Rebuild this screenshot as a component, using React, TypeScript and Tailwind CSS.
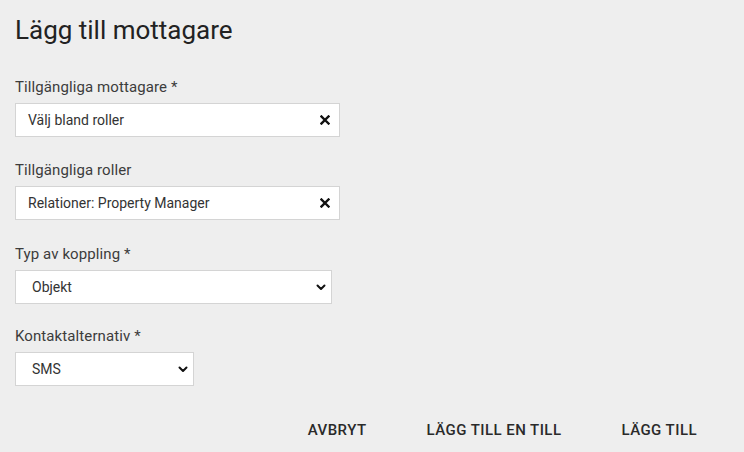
import React from 'react';

function ClearIcon() {
  return (
    <svg width="10" height="10" viewBox="0 0 10 10" className="shrink-0">
      <path d="M1.5 1.5 L8.5 8.5 M8.5 1.5 L1.5 8.5" stroke="#111" strokeWidth="2.4" strokeLinecap="square" />
    </svg>
  );
}

function Chevron() {
  return (
    <svg width="10" height="7" viewBox="0 0 10 7" className="shrink-0">
      <path d="M1.5 1.5 L5 5 L8.5 1.5" stroke="#111" strokeWidth="2" fill="none" strokeLinecap="round" strokeLinejoin="round" />
    </svg>
  );
}

function Label({ children }: { children: React.ReactNode }) {
  return <div className="text-[15px] leading-[20px] tracking-[0.1px] text-[#3c3c3c]">{children}</div>;
}

export default function App() {
  return (
    <div
      className="w-[744px] h-[452px] bg-[#eeeeee] overflow-hidden flex flex-col pl-[15px] pt-[15px]"
      style={{ fontFamily: 'Roboto, "Liberation Sans", sans-serif' }}
    >
      <h1 className="text-[26px] leading-[30px] text-[#222] font-normal">Lägg till mottagare</h1>

      <div className="mt-[32px]">
        <Label>Tillgängliga mottagare *</Label>
        <div className="mt-[6px] w-[325px] h-[34px] bg-white border border-[#d4d4d4] flex items-center justify-between pl-[12px] pr-[9px]">
          <span className="text-[14px] text-[#333]">Välj bland roller</span>
          <ClearIcon />
        </div>
      </div>

      <div className="mt-[23px]">
        <Label>Tillgängliga roller</Label>
        <div className="mt-[6px] w-[325px] h-[34px] bg-white border border-[#d4d4d4] flex items-center justify-between pl-[12px] pr-[9px]">
          <span className="text-[14px] text-[#333]">Relationer: Property Manager</span>
          <ClearIcon />
        </div>
      </div>

      <div className="mt-[24px]">
        <Label>Typ av koppling *</Label>
        <div className="mt-[6px] w-[317px] h-[34px] bg-white border border-[#d4d4d4] flex items-center justify-between pl-[16px] pr-[5px]">
          <span className="text-[14px] text-[#333]">Objekt</span>
          <Chevron />
        </div>
      </div>

      <div className="mt-[22px]">
        <Label>Kontaktalternativ *</Label>
        <div className="mt-[6px] w-[179px] h-[34px] bg-white border border-[#d4d4d4] flex items-center justify-between pl-[16px] pr-[5px]">
          <span className="text-[14px] text-[#333]">SMS</span>
          <Chevron />
        </div>
      </div>

      <div className="mt-[26px] flex justify-end pr-[17px]">
        <button className="px-[30px] h-[36px] text-[15px] font-medium tracking-[0.45px] text-[#2a2a2a]">AVBRYT</button>
        <button className="px-[30px] h-[36px] text-[15px] font-medium tracking-[0.45px] text-[#2a2a2a]">LÄGG TILL EN TILL</button>
        <button className="px-[30px] h-[36px] text-[15px] font-medium tracking-[0.45px] text-[#2a2a2a]">LÄGG TILL</button>
      </div>
    </div>
  );
}
